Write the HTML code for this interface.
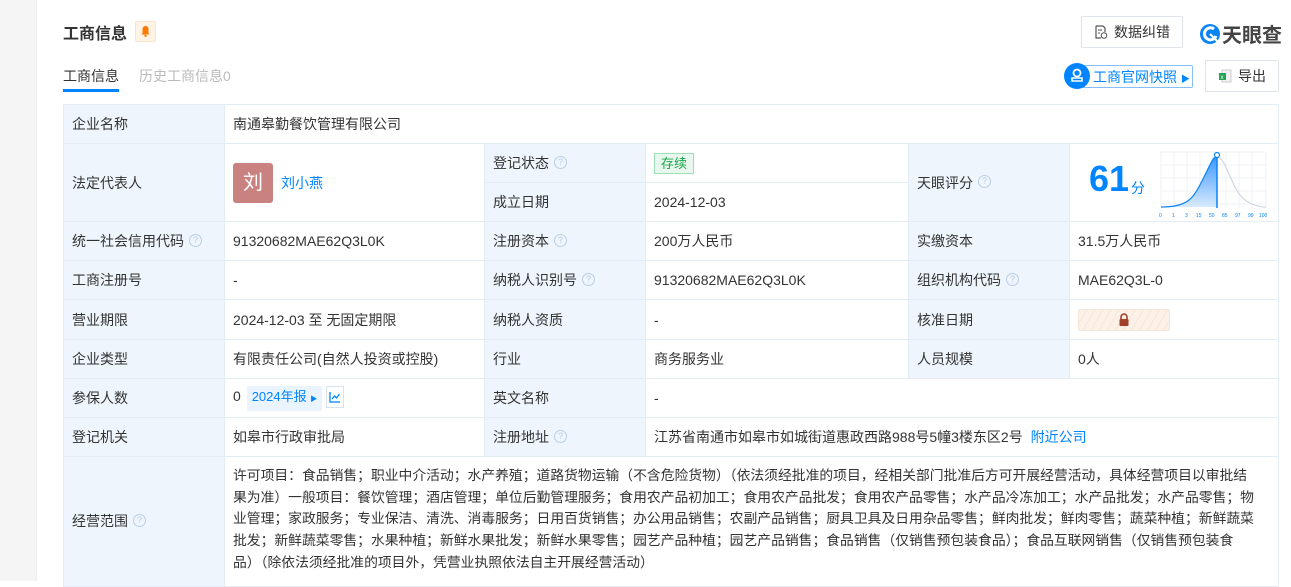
<!DOCTYPE html>
<html><head><meta charset="utf-8"><style>
*{box-sizing:border-box;margin:0;padding:0}
body{width:1291px;height:581px;overflow:hidden;background:#fff;font-family:"Liberation Sans","Noto Sans CJK SC",sans-serif;color:#333;font-size:14px;position:relative}
.strip{position:absolute;left:0;top:0;width:37px;height:581px;background:#f5f5f6;border-right:1px solid #eee}
.abs{position:absolute}
table{position:absolute;left:63px;top:104px;border-collapse:collapse;table-layout:fixed}
td{border:1px solid #e4ecf6;padding:0 8px;height:39px;vertical-align:middle;white-space:nowrap;font-size:14px;color:#333}
td.l{background:#eef5fd}
.q{display:inline-block;width:13px;height:13px;border:1px solid #b9cee6;border-radius:50%;font-size:9px;line-height:11px;text-align:center;color:#b9cee6;margin-left:5px;vertical-align:middle;position:relative;top:-2px}
a{color:#0084ff;text-decoration:none}
.btn{position:absolute;border:1px solid #dfe3ea;border-radius:2px;background:#fff;font-size:14px;color:#333;display:flex;align-items:center;justify-content:center}
.scope div{white-space:nowrap;line-height:21.7px}
</style></head><body>
<div class="strip"></div>
<div class="abs" style="left:63px;top:20px;font-size:16px;font-weight:bold;color:#333">工商信息</div>
<div class="abs" style="left:135px;top:21px;width:21px;height:21px;background:#fff3e6;border:1px solid #fde3c8;border-radius:2px"><svg width="19" height="19" viewBox="0 0 19 19"><path d="M9.5 4c-2 0-3 1.5-3 3.5v3.5l-1 1.5h8l-1-1.5V7.5C12.5 5.5 11.5 4 9.5 4z" fill="#ff7a00"/><circle cx="9.5" cy="13.8" r="1.2" fill="#ff7a00"/></svg></div>
<div class="abs" style="left:63px;top:66px;font-size:14px;color:#333">工商信息</div>
<div class="abs" style="left:63px;top:89px;width:56px;height:3px;background:#0084ff"></div>
<div class="abs" style="left:139px;top:66px;font-size:14px;color:#bbb">历史工商信息0</div>
<div class="btn" style="left:1081px;top:16px;width:102px;height:32px">
<svg width="14" height="14" viewBox="0 0 14 14" style="margin-right:6px"><path d="M2 1h7l2 2v4M2 1v12h5" fill="none" stroke="#555" stroke-width="1.2"/><path d="M4 5h4M4 8h2" stroke="#555"/><circle cx="10" cy="10.5" r="2.8" fill="none" stroke="#555"/></svg>数据纠错</div>
<div class="abs" style="left:1199px;top:19px;display:flex;align-items:center">
<svg width="22" height="22" viewBox="0 0 22 22"><circle cx="11" cy="11" r="10" fill="#0a84f5"/><path d="M15 6a6 6 0 1 0 2 7" fill="none" stroke="#fff" stroke-width="3"/><path d="M11 11l8 8" stroke="#fff" stroke-width="2"/></svg>
<span style="font-size:20px;font-weight:bold;color:#444;margin-left:1px">天眼查</span></div>
<div class="abs" style="left:1075px;top:65px;width:118px;height:23px;border:1px solid #84bfff;border-radius:2px"></div>
<div class="abs" style="left:1064px;top:63px;width:26px;height:26px;border-radius:50%;background:#0084ff"><svg width="26" height="26" viewBox="0 0 26 26"><circle cx="13" cy="10" r="3.5" fill="none" stroke="#fff" stroke-width="1.8"/><path d="M8 15h10v3H8z" fill="none" stroke="#fff" stroke-width="1.6"/></svg></div>
<div class="abs" style="left:1093px;top:67px;font-size:14px;color:#0084ff">工商官网快照 <span style="font-size:9px">▶</span></div>
<div class="btn" style="left:1205px;top:60px;width:74px;height:32px"><svg width="14" height="14" viewBox="0 0 14 14" style="margin-right:6px"><rect x="4" y="1" width="9" height="12" fill="#f1f1f1" stroke="#ccc"/><rect x="1" y="4" width="7" height="7" fill="#22a454"/><text x="2.5" y="10" font-size="6" fill="#fff" font-family="Liberation Sans">x</text></svg>导出</div>

<table>
<colgroup><col style="width:161px"><col style="width:260px"><col style="width:161px"><col style="width:263px"><col style="width:161px"><col style="width:209px"></colgroup>
<tr><td class="l">企业名称</td><td colspan="5">南通皋勤餐饮管理有限公司</td></tr>
<tr><td class="l" rowspan="2">法定代表人</td><td rowspan="2"><span style="display:inline-block;width:40px;height:40px;background:#c98280;border-radius:3px;color:#fff;font-size:20px;text-align:center;line-height:40px;vertical-align:middle">刘</span><a style="margin-left:8px;vertical-align:middle">刘小燕</a></td><td class="l">登记状态<span class="q">?</span></td><td><span style="display:inline-block;border:1px solid #9de0b5;background:#e8f8ee;color:#1aa34a;font-size:13px;padding:0 6px;line-height:19px">存续</span></td><td class="l" rowspan="2">天眼评分<span class="q">?</span></td><td rowspan="2" style="position:relative;padding:0">
<span style="position:absolute;left:19px;top:14px;font-size:36px;font-weight:bold;color:#0084ff;font-family:'Liberation Sans',sans-serif">61</span><span style="position:absolute;left:61px;top:34px;color:#0084ff;font-size:14px">分</span>
<svg style="position:absolute;left:88px;top:5px" width="112" height="72" viewBox="0 0 112 72"><g stroke="#edf1f6" stroke-width="1"><path d="M3 3h105M3 16h105M3 29h105M3 42h105M3 55h105M3 3v56M16 3v56M29 3v56M42 3v56M55 3v56M68 3v56M81 3v56M94 3v56M108 3v56"/></g><defs><linearGradient id="g" x1="0" y1="0" x2="0" y2="1"><stop offset="0" stop-color="#3c97ff"/><stop offset="1" stop-color="#d8eaff"/></linearGradient></defs><path d="M3 58C30 58 35 50 45 30S55 8 59 8V58Z" fill="url(#g)"/><path d="M59 8C66 8 70 25 78 40S100 58 108 58" fill="none" stroke="#cfd8e4" stroke-width="1.2"/><path d="M3 58C30 58 35 50 45 30S55 8 59 8" fill="none" stroke="#0a84f5" stroke-width="1.2"/><path d="M59 8v51" stroke="#0a84f5" stroke-width="1.5"/><circle cx="59" cy="6" r="2.5" fill="#fff" stroke="#0a84f5" stroke-width="1.2"/><text y="68" font-size="5" fill="#0a84f5" font-family="Liberation Sans"><tspan x="1">0</tspan><tspan x="14">1</tspan><tspan x="27">3</tspan><tspan x="38">15</tspan><tspan x="51">50</tspan><tspan x="64">85</tspan><tspan x="77">97</tspan><tspan x="90">99</tspan><tspan x="101">100</tspan></text></svg></td></tr>
<tr><td class="l">成立日期</td><td>2024-12-03</td></tr>
<tr><td class="l">统一社会信用代码<span class="q">?</span></td><td>91320682MAE62Q3L0K</td><td class="l">注册资本<span class="q">?</span></td><td>200万人民币</td><td class="l">实缴资本</td><td>31.5万人民币</td></tr>
<tr><td class="l">工商注册号</td><td>-</td><td class="l">纳税人识别号<span class="q">?</span></td><td>91320682MAE62Q3L0K</td><td class="l">组织机构代码<span class="q">?</span></td><td>MAE62Q3L-0</td></tr>
<tr><td class="l" style="height:40px">营业期限</td><td>2024-12-03 至 无固定期限</td><td class="l">纳税人资质</td><td>-</td><td class="l">核准日期</td><td><span style="display:inline-block;width:92px;height:22px;border:1px solid #f6e6d6;border-radius:2px;background:repeating-linear-gradient(120deg,#fcf1e8 0 6px,#f7e6d8 6px 7px);text-align:center;vertical-align:middle"><svg width="12" height="14" viewBox="0 0 12 14" style="margin-top:3px"><path d="M3 6V4a3 3 0 0 1 6 0v2" fill="none" stroke="#a3402a" stroke-width="1.6"/><rect x="1.5" y="6" width="9" height="7" rx="1" fill="#a3402a"/></svg></span></td></tr>
<tr><td class="l">企业类型</td><td>有限责任公司(自然人投资或控股)</td><td class="l">行业</td><td>商务服务业</td><td class="l">人员规模</td><td>0人</td></tr>
<tr><td class="l">参保人数</td><td>0 <span style="display:inline-block;background:#eaf4ff;color:#0084ff;font-size:13px;padding:0 5px;line-height:22px;margin-left:2px">2024年报 <span style="font-size:7px">▶</span></span><span style="display:inline-block;width:18px;height:22px;border:1px solid #d6e2ef;margin-left:4px;vertical-align:middle;text-align:center"><svg width="12" height="12" viewBox="0 0 12 12" style="margin-top:4px"><path d="M1 1v10h10" fill="none" stroke="#0084ff" stroke-width="1.3"/><path d="M3 8l2.5-3 2 2 3-4" fill="none" stroke="#0084ff" stroke-width="1.3"/></svg></span></td><td class="l">英文名称</td><td colspan="3">-</td></tr>
<tr><td class="l">登记机关</td><td>如皋市行政审批局</td><td class="l">注册地址<span class="q">?</span></td><td colspan="3">江苏省南通市如皋市如城街道惠政西路988号5幢3楼东区2号 <a style="margin-left:4px">附近公司</a></td></tr>
<tr><td class="l" style="height:125px">经营范围<span class="q">?</span></td><td colspan="5" class="scope" style="padding:8px 8px 12px;vertical-align:top;font-size:13.8px">
<div>许可项目：食品销售；职业中介活动；水产养殖；道路货物运输（不含危险货物）（依法须经批准的项目，经相关部门批准后方可开展经营活动，具体经营项目以审批结</div>
<div>果为准）一般项目：餐饮管理；酒店管理；单位后勤管理服务；食用农产品初加工；食用农产品批发；食用农产品零售；水产品冷冻加工；水产品批发；水产品零售；物</div>
<div>业管理；家政服务；专业保洁、清洗、消毒服务；日用百货销售；办公用品销售；农副产品销售；厨具卫具及日用杂品零售；鲜肉批发；鲜肉零售；蔬菜种植；新鲜蔬菜</div>
<div>批发；新鲜蔬菜零售；水果种植；新鲜水果批发；新鲜水果零售；园艺产品种植；园艺产品销售；食品销售（仅销售预包装食品）；食品互联网销售（仅销售预包装食</div>
<div>品）（除依法须经批准的项目外，凭营业执照依法自主开展经营活动）</div>
</td></tr>
</table>
</body></html>
